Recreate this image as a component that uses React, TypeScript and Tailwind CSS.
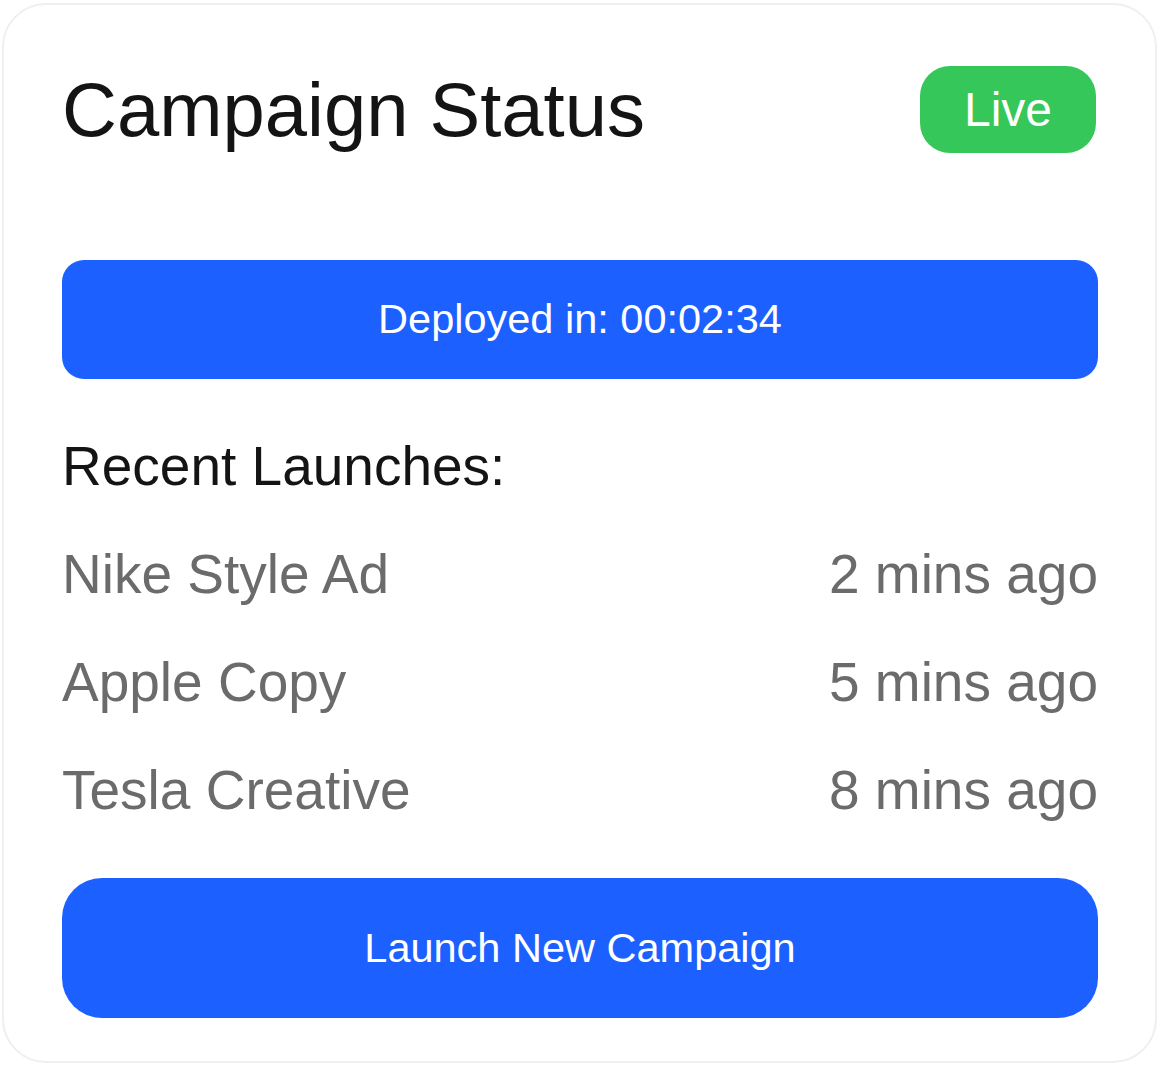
import React from "react";

const rows = [
  { name: "Nike Style Ad", time: "2 mins ago" },
  { name: "Apple Copy", time: "5 mins ago" },
  { name: "Tesla Creative", time: "8 mins ago" },
];

export default function App() {
  return (
    <div
      className="w-[1160px] h-[1067px] bg-white pt-[3px] pl-[2px] pr-[3px] pb-[4px]"
      style={{ fontFamily: '"Liberation Sans", Arial, sans-serif' }}
    >
      <div className="h-full rounded-[44px] border-2 border-[#efefef] bg-white pl-[58px] pr-[57px] pt-[61px] pb-[42px] flex flex-col">
        <div className="flex items-center justify-between">
          <h1 className="text-[76px] leading-none text-[#141414]">Campaign Status</h1>
          <span className="mr-[2px] h-[87px] w-[176px] rounded-[30px] bg-[#35c759] text-white text-[48px] leading-none flex items-center justify-center">
            Live
          </span>
        </div>
        <div className="mt-[107px] h-[119px] rounded-[22px] bg-[#1c60ff] text-white text-[41.5px] flex items-center justify-center">
          Deployed in: 00:02:34
        </div>
        <div className="mt-[55px] text-[55px] leading-[65px] text-[#141414]">Recent Launches:</div>
        <div className="mt-[43px] flex flex-col gap-[43px]">
          {rows.map((r) => (
            <div key={r.name} className="flex justify-between text-[55px] leading-[65px] text-[#6b6b6b]">
              <span>{r.name}</span>
              <span>{r.time}</span>
            </div>
          ))}
        </div>
        <button className="mt-[55px] h-[140px] w-full rounded-[40px] bg-[#1c60ff] text-white text-[41.5px]">
          Launch New Campaign
        </button>
      </div>
    </div>
  );
}
